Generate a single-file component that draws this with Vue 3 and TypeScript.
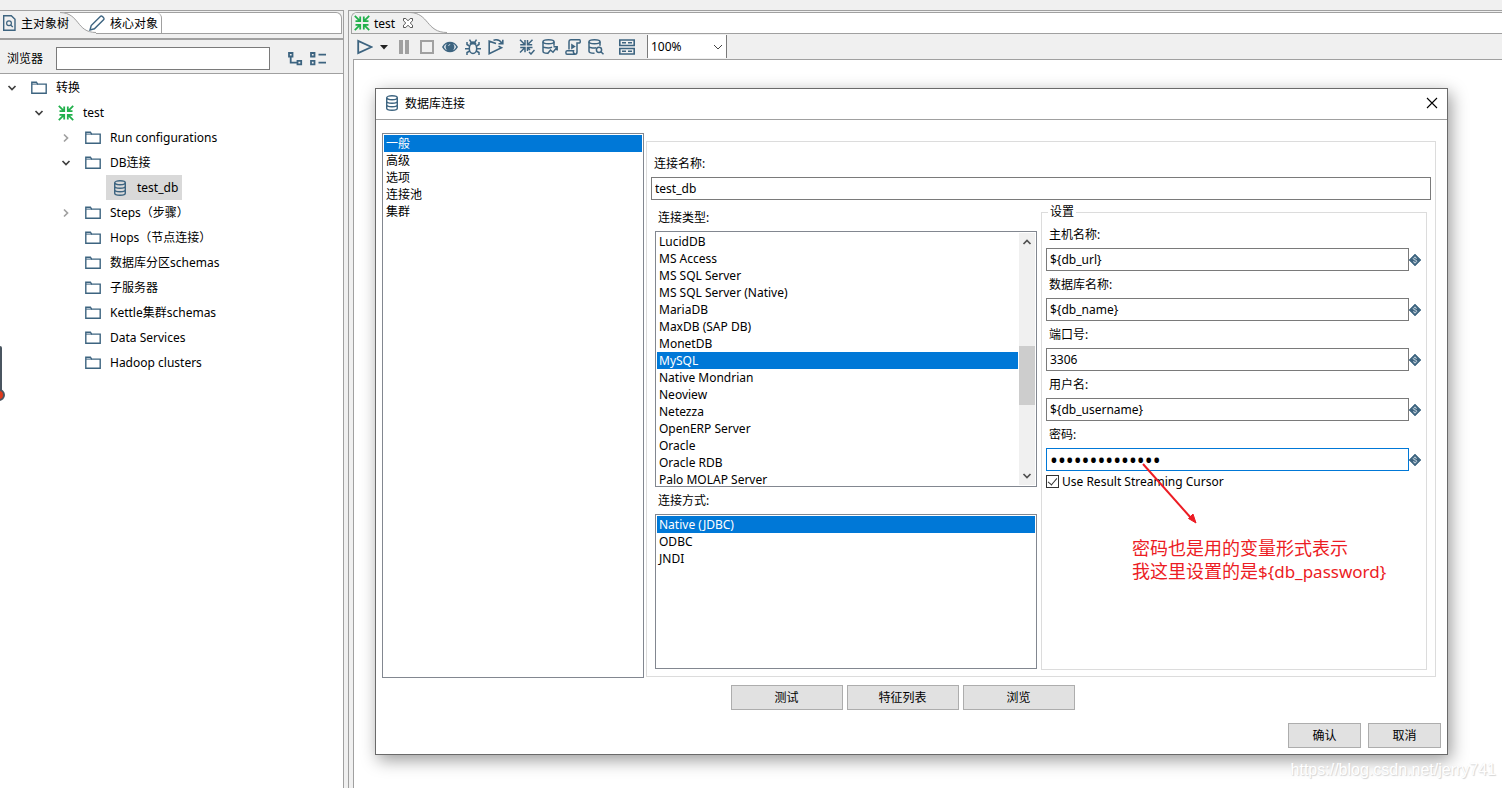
<script setup lang="ts">
import { ref } from 'vue'

interface TreeRow {
  label: string
  level: number
  icon: 'folder' | 'trans' | 'db'
  state?: 'open' | 'closed'
}

interface Field {
  id: string
  label: string
  type: string
  value: string
}

const tree: TreeRow[] = [
  { label: '转换', level: 0, icon: 'folder', state: 'open' },
  { label: 'test', level: 1, icon: 'trans', state: 'open' },
  { label: 'Run configurations', level: 2, icon: 'folder', state: 'closed' },
  { label: 'DB连接', level: 2, icon: 'folder', state: 'open' },
  { label: 'test_db', level: 3, icon: 'db' },
  { label: 'Steps（步骤）', level: 2, icon: 'folder', state: 'closed' },
  { label: 'Hops（节点连接）', level: 2, icon: 'folder' },
  { label: '数据库分区schemas', level: 2, icon: 'folder' },
  { label: '子服务器', level: 2, icon: 'folder' },
  { label: 'Kettle集群schemas', level: 2, icon: 'folder' },
  { label: 'Data Services', level: 2, icon: 'folder' },
  { label: 'Hadoop clusters', level: 2, icon: 'folder' },
]

const sections = ['一般', '高级', '选项', '连接池', '集群']
const types = [
  'LucidDB', 'MS Access', 'MS SQL Server', 'MS SQL Server (Native)', 'MariaDB',
  'MaxDB (SAP DB)', 'MonetDB', 'MySQL', 'Native Mondrian', 'Neoview', 'Netezza',
  'OpenERP Server', 'Oracle', 'Oracle RDB', 'Palo MOLAP Server',
]
const methods = ['Native (JDBC)', 'ODBC', 'JNDI']

const fields = ref<Field[]>([
  { id: 'host', label: '主机名称:', type: 'text', value: '${db_url}' },
  { id: 'dbname', label: '数据库名称:', type: 'text', value: '${db_name}' },
  { id: 'port', label: '端口号:', type: 'text', value: '3306' },
  { id: 'user', label: '用户名:', type: 'text', value: '${db_username}' },
  { id: 'password', label: '密码:', type: 'password', value: '${db_password}' },
])

const node = ref('test_db')
const section = ref('一般')
const dbType = ref('MySQL')
const method = ref('Native (JDBC)')
const connectionName = ref('test_db')
const filter = ref('')
const zoom = ref('100%')
const streaming = ref(true)
</script>

<template>
  <div class="app">
    <svg class="symbols" aria-hidden="true">
      <symbol id="i-folder" viewBox="0 0 16 16">
        <path d="M.8 13.3V2.2h4.6l1.2 1.9h8.6v9.2z" fill="none" stroke="#3d6480" stroke-width="1.4" />
        <path d="M1 4.1h6" stroke="#3d6480" />
      </symbol>
      <symbol id="i-trans" viewBox="0 0 16 16">
        <g fill="none" stroke="#21b04b" stroke-width="1.8">
          <path d="M.8.8l5 5M6.2 1.5v4.7H1.5" />
          <path d="M15.2.8l-5 5M9.8 1.5v4.7h4.7" />
          <path d="M.8 15.2l5-5M6.2 14.5V9.8H1.5" />
          <path d="M15.2 15.2l-5-5M9.8 14.5V9.8h4.7" />
        </g>
      </symbol>
      <symbol id="i-db" viewBox="0 0 16 16">
        <g fill="none" stroke="#3d6480" stroke-width="1.4">
          <ellipse cx="8" cy="2.8" rx="5.3" ry="2" />
          <path d="M2.7 2.8v10.4c0 1.1 2.4 2 5.3 2s5.3-.9 5.3-2V2.8M2.7 6.3c0 1.1 2.4 2 5.3 2s5.3-.9 5.3-2M2.7 9.8c0 1.1 2.4 2 5.3 2s5.3-.9 5.3-2" />
        </g>
      </symbol>
      <symbol id="i-var" viewBox="0 0 12 12">
        <path d="M6 0l6 6-6 6-6-6z" fill="#3d6480" stroke="#3d6480" stroke-width=".6" />
        <path d="M7.700 4.500C7.400 3.900 6.800 3.700 6 3.700c-1 0-1.700.3-1.700 1.100C4.300 6.300 7.800 5.500 7.800 7.200c0 .8-.8 1.100-1.800 1.100-.9 0-1.500-.2-1.900-.9M6 2.600v1.100M6 8.300v1.200" fill="none" stroke="#dfe8ee" stroke-width=".9" />
      </symbol>
      <symbol id="i-down" viewBox="0 0 10 10">
        <path d="M1.500 3L5 6.500 8.500 3" fill="none" stroke="currentColor" stroke-width="1.700" />
      </symbol>
    </svg>

    <aside class="sidebar">
      <div class="tabbar" role="tablist">
        <svg class="tab-shape" width="100" height="22" viewBox="0 0 100 22" aria-hidden="true">
          <path d="M0 0H60C80 1 78 21 96 21V22H0z" fill="#f0f0f0" />
          <path d="M60 .5C80 1 76 20.500 96 20.500" fill="none" stroke="#a0a0a0" />
        </svg>
        <button class="tab" role="tab" aria-selected="true">
          <svg class="ic" viewBox="0 0 16 16" aria-hidden="true">
            <path d="M2.700.7h7.600l3.700 3.600v11H2.700z" fill="none" stroke="#3d6480" stroke-width="1.400" />
            <circle cx="8" cy="8.200" r="2.400" fill="none" stroke="#3d6480" stroke-width="1.200" />
            <path d="M9.600 10l2.200 2" stroke="#3d6480" stroke-width="1.300" />
          </svg>
          <span>主对象树</span>
        </button>
        <button class="tab core" role="tab" aria-selected="false">
          <svg class="ic" viewBox="0 0 16 16" aria-hidden="true">
            <path d="M1 15l1.200-4.400L11.600 1.200c1-1 4.200 2.200 3.200 3.200L5.400 13.800z" fill="none" stroke="#3d6480" stroke-width="1.400" />
          </svg>
          <span>核心对象</span>
        </button>
      </div>
      <div class="filter">
        <label for="filter">浏览器</label>
        <input id="filter" v-model="filter" type="text" />
        <button class="plain" aria-label="展开">
          <svg width="16" height="16" viewBox="0 0 16 16" fill="none" stroke="#3d6480" stroke-width="1.800" aria-hidden="true">
            <path d="M2 2h3.500v3.500H2zM10.500 9.800h3.700v3.500h-3.700zM3.700 5.500v6.200h6.800" />
          </svg>
        </button>
        <button class="plain" aria-label="折叠">
          <svg width="16" height="16" viewBox="0 0 16 16" fill="none" stroke="#3d6480" stroke-width="1.800" aria-hidden="true">
            <path d="M1 2h3.500v3.500H1zM1 9.800h3.500v3.500H1zM8.500 3.700H16M8.500 11.600H16" />
          </svg>
        </button>
      </div>
      <ul class="tree" role="tree">
        <li v-for="row in tree" :key="row.label" role="treeitem" :class="['row', 'l' + row.level]" @click="node = row.label">
          <span class="twist" :class="row.state">
            <svg v-if="row.state" width="10" height="10" aria-hidden="true"><use href="#i-down" /></svg>
          </span>
          <span class="node" :class="{ on: row.label === node }">
            <svg class="ic" aria-hidden="true"><use :href="'#i-' + row.icon" /></svg>
            <span>{{ row.label }}</span>
          </span>
        </li>
      </ul>
    </aside>

    <main class="editor">
      <div class="tabbar etabs" role="tablist">
        <svg class="tab-shape" width="100" height="22" viewBox="0 0 100 22" aria-hidden="true">
          <path d="M0 0H58C78 1 76 21 96 21V22H0z" fill="#f0f0f0" />
          <path d="M58 .5C77 1 74 20.500 95 20.500" fill="none" stroke="#a0a0a0" />
        </svg>
        <button class="tab" role="tab" aria-selected="true">
          <svg class="ic" aria-hidden="true"><use href="#i-trans" /></svg>
          <span>test</span>
        </button>
        <button class="plain" aria-label="关闭标签">
          <svg width="12" height="12" viewBox="0 0 12 12" aria-hidden="true">
            <path d="M1.500 1.500h2.300L6 3.800l2.200-2.300h2.300v2.300L8.200 6l2.300 2.200v2.300H8.200L6 8.200l-2.200 2.300H1.500V8.200L3.800 6 1.500 3.800z" fill="#fff" stroke="#555" />
          </svg>
        </button>
      </div>
      <div class="toolbar">
        <button class="tool" aria-label="运行">
          <svg viewBox="0 0 16 16"><path d="M1.200 1.900v12.200L14.500 8z" fill="none" stroke="#3d6480" stroke-width="1.800" /></svg>
        </button>
        <button class="tool caret" aria-label="运行选项">
          <svg viewBox="0 0 16 16"><path d="M4 6h8l-4 4.500z" fill="#222" /></svg>
        </button>
        <button class="tool" aria-label="暂停">
          <svg viewBox="0 0 16 16"><path d="M3 1h4v14H3zM9 1h4v14H9z" fill="#a0a0a0" /></svg>
        </button>
        <button class="tool" aria-label="停止">
          <svg viewBox="0 0 16 16"><path d="M2 2h12v12H2z" fill="none" stroke="#a0a0a0" stroke-width="2" /></svg>
        </button>
        <button class="tool" aria-label="预览">
          <svg viewBox="0 0 16 16">
            <path d="M0 8c3.500-7 12.500-7 16 0-3.500 7-12.500 7-16 0z" fill="#3d6480" />
            <path d="M1.800 8c.7-1.600 1.800-2.700 3-3.200-1.500 2-1.500 4.400 0 6.400-1.200-.5-2.300-1.600-3-3.200zM14.200 8c-.7-1.600-1.800-2.700-3-3.200 1.500 2 1.500 4.400 0 6.400 1.200-.5 2.300-1.600 3-3.200z" fill="#d8e2ea" />
            <path d="M6.500 6.800c.3-.9.900-1.300 1.700-1.300" fill="none" stroke="#c6d5df" />
          </svg>
        </button>
        <button class="tool" aria-label="调试">
          <svg viewBox="0 0 16 16" fill="none" stroke="#3d6480" stroke-width="1.500">
            <ellipse cx="8" cy="9.500" rx="3.700" ry="5" />
            <path d="M5.500 4.500C6 2.500 10 2.500 10.500 4.500zM6 3L4.500.7M10 3L11.500.7M4.500 7L2 5.500V3M11.500 7L14 5.500V3M4.300 9.700H0M11.700 9.700H16M4.800 12L2 13.500V16M11.200 12l2.800 1.500V16" />
          </svg>
        </button>
        <button class="tool" aria-label="重放">
          <svg viewBox="0 0 16 16" fill="none" stroke="#3d6480" stroke-width="1.600">
            <path d="M8 4.500L1.200 2.200v12.500L13.500 8.800l-3-1.700M5.500 1.200c3.500-1 6.500 0 8.500 3M14.800 .8v4h-4.300" />
          </svg>
        </button>
        <button class="tool gap" aria-label="校验">
          <svg viewBox="0 0 16 16" fill="none" stroke="#3d6480" stroke-width="1.500">
            <path d="M1 .8l4.500 4.500M6 1v4.700H1.200M13.500.8L9 5.300M8.500 1v4.700h4.700M1 13.500L5.500 9M6 13.300V8.600H1.200M8.500 12V8.600h5M9 9l2 2M10 13l2 2 3.500-4" />
          </svg>
        </button>
        <button class="tool" aria-label="影响分析">
          <svg viewBox="0 0 16 16" fill="none" stroke="#3d6480" stroke-width="1.500">
            <ellipse cx="6.500" cy="2.800" rx="5.500" ry="2" />
            <path d="M1 2.800v9.400c0 1.200 2.300 2 4.500 2M12 2.800v4M1 7.200c0 1.400 6 2.600 9 1M5.500 14.800l3-3.800 2.500 2.200 4-5M11.500 7.800h3.700v3.700" />
          </svg>
        </button>
        <button class="tool" aria-label="脚本">
          <svg viewBox="0 0 16 16" fill="none" stroke="#3d6480" stroke-width="1.500">
            <path d="M4 10.500V3c0-1.500.8-2.200 2-2.200h8.500c1 0 1 3.200 0 3.200H12v8.700c0 1.700-.8 2.500-2 2.500H2c-1.500 0-1.500-3.500 0-3.500h6.500c-.5 2 .3 3 1.500 3" />
            <path d="M6.200 4.500v6l4.600-3z" fill="#3d6480" stroke="none" />
          </svg>
        </button>
        <button class="tool" aria-label="浏览数据库">
          <svg viewBox="0 0 16 16" fill="none" stroke="#3d6480" stroke-width="1.500">
            <ellipse cx="6.500" cy="2.800" rx="5.500" ry="2" />
            <path d="M1 2.800v9.400c0 1.200 2.500 2 5.500 2M12 2.800v4M1 7.200c0 1.400 4 2.300 7 1.600" />
            <circle cx="11" cy="10.800" r="2.600" />
            <path d="M12.900 12.700l2.600 2.600" />
          </svg>
        </button>
        <button class="tool gap" aria-label="结果面板">
          <svg viewBox="0 0 16 16" fill="none" stroke="#3d6480" stroke-width="1.600">
            <path d="M.8 1h14.400v5.500H.8zM.8 9.500h14.400V15H.8zM3 3.700h4M9 3.700h4M3 12.200h4M9 12.200h4" />
          </svg>
        </button>
        <span class="zoom">
          <select v-model="zoom" aria-label="缩放">
            <option>100%</option>
          </select>
          <svg width="10" height="10" viewBox="0 0 10 10" aria-hidden="true"><path d="M1 3l4 4 4-4" fill="none" stroke="#444" /></svg>
        </span>
      </div>
      <div class="canvas"></div>
    </main>

    <section class="dialog" role="dialog" aria-labelledby="dlg-title">
      <header class="titlebar">
        <svg class="ic" aria-hidden="true"><use href="#i-db" /></svg>
        <span id="dlg-title">数据库连接</span>
        <button class="plain close" aria-label="关闭">
          <svg width="12" height="12" viewBox="0 0 12 12"><path d="M1 1l10 10M11 1L1 11" stroke="#000" stroke-width="1.100" /></svg>
        </button>
      </header>
      <div class="body">
        <ul class="list sections" role="listbox" aria-label="类别">
          <li v-for="s in sections" :key="s" role="option" :aria-selected="s === section" @click="section = s">{{ s }}</li>
        </ul>
        <div class="panel">
          <label class="lbl" for="conn-name">连接名称:</label>
          <input id="conn-name" v-model="connectionName" class="box" type="text" />
          <div class="cols">
            <div class="col">
              <span id="lbl-type" class="lbl">连接类型:</span>
              <div class="types">
                <ul class="list" role="listbox" aria-labelledby="lbl-type">
                  <li v-for="t in types" :key="t" role="option" :aria-selected="t === dbType" @click="dbType = t">{{ t }}</li>
                </ul>
                <div class="scroll" aria-hidden="true">
                  <svg class="up" width="10" height="10"><use href="#i-down" /></svg>
                  <span class="thumb"></span>
                  <svg width="10" height="10"><use href="#i-down" /></svg>
                </div>
              </div>
              <span id="lbl-method" class="lbl">连接方式:</span>
              <ul class="list methods" role="listbox" aria-labelledby="lbl-method">
                <li v-for="m in methods" :key="m" role="option" :aria-selected="m === method" @click="method = m">{{ m }}</li>
              </ul>
            </div>
            <fieldset class="settings">
              <legend>设置</legend>
              <div v-for="f in fields" :key="f.id" class="field">
                <label class="lbl" :for="f.id">{{ f.label }}</label>
                <div class="line">
                  <input :id="f.id" v-model="f.value" class="box" :class="{ secret: f.type === 'password' }" :type="f.type" autocomplete="off" />
                  <svg width="12" height="12" viewBox="0 0 12 12" aria-hidden="true"><use href="#i-var" /></svg>
                </div>
              </div>
              <label class="check"><input v-model="streaming" type="checkbox" /><span>Use Result Streaming Cursor</span></label>
              <div class="note">
                <svg width="60" height="66" viewBox="0 0 60 66" aria-hidden="true">
                  <path d="M1 2L49 56" stroke="#ec1c24" stroke-width="2" />
                  <path d="M54 61L46.500 56.500 51 52z" fill="#ec1c24" stroke="#ec1c24" />
                </svg>
                <p>密码也是用的变量形式表示<br />我这里设置的是<span class="var">${db_password}</span></p>
              </div>
            </fieldset>
          </div>
        </div>
      </div>
      <div class="actions">
        <button class="btn wide">测试</button>
        <button class="btn wide">特征列表</button>
        <button class="btn wide">浏览</button>
      </div>
      <footer class="confirm">
        <button class="btn">确认</button>
        <button class="btn">取消</button>
      </footer>
    </section>

    <div class="edge" aria-hidden="true"><span></span></div>
    <span class="watermark">https://blog.csdn.net/jerry741</span>
  </div>
</template>

<style>
body {
  margin: 0;
}
</style>

<style scoped>
.app {
  position: relative;
  display: flex;
  gap: 4px;
  box-sizing: border-box;
  min-height: 100vh;
  padding-top: 10px;
  overflow: hidden;
  background: #f0f0f0;
  color: #000;
  font: 12px/17px "Noto Sans", "Noto Sans CJK SC", sans-serif;
}
.app *,
.app *::before,
.app *::after {
  box-sizing: border-box;
}
.symbols {
  position: absolute;
  width: 0;
  height: 0;
}
button,
input,
select {
  font: inherit;
  color: inherit;
  margin: 0;
  outline: none;
}
ul {
  list-style: none;
  margin: 0;
  padding: 0;
}
.ic {
  display: block;
  flex: none;
  width: 16px;
  height: 16px;
}
.plain,
.tab,
.tool {
  display: flex;
  align-items: center;
  justify-content: center;
  padding: 0;
  border: 0;
  background: none;
  white-space: nowrap;
}

/* sidebar */
.sidebar {
  display: flex;
  flex-direction: column;
  flex: none;
  width: 344px;
  border: solid #a0a0a0;
  border-width: 1px 1px 0 0;
  padding-top: 1px;
}
.tabbar {
  position: relative;
  display: flex;
  flex: none;
  height: 22px;
  margin-right: 1px;
  border: solid #a0a0a0;
  border-width: 1px 1px 1px 0;
  border-radius: 0 6px 0 0;
  background: #fff;
}
.tab-shape {
  position: absolute;
  left: 0;
  top: -1px;
}
.tab {
  position: relative;
  gap: 4px;
  padding-left: 1px;
}
.core {
  gap: 5px;
  margin-left: 20px;
  padding: 0 3px 0 0;
  border-right: 1px solid #a0a0a0;
  border-radius: 0 5px 0 0;
}
.filter {
  display: flex;
  align-items: center;
  gap: 7px;
  height: 36px;
  flex: none;
  margin-top: 4px;
  padding: 4px 17px 0 7px;
  border-top: 2px solid #a0a0a0;
  border-bottom: 1px solid #a0a0a0;
}
.filter label {
  width: 42px;
}
.filter input {
  flex: 1;
  min-width: 0;
  height: 23px;
  margin-right: 10px;
  border: 1px solid #7a7a7a;
  background: #fff;
}
.tree {
  flex: 1;
  padding-top: 1px;
  background: #fff;
}
.row {
  display: flex;
  align-items: center;
  height: 25px;
}
.l1 {
  padding-left: 27px;
}
.l2 {
  padding-left: 54px;
}
.l3 {
  padding-left: 81px;
}
.twist {
  display: flex;
  justify-content: center;
  width: 24px;
  margin-right: 1px;
  color: #404040;
}
.twist.closed {
  color: #a0a0a0;
}
.closed svg {
  transform: rotate(-90deg);
}
.node {
  display: flex;
  align-items: center;
  gap: 9px;
  height: 25px;
  padding: 0 4px 0 6px;
}
.node.on {
  background: #d9d9d9;
}

/* editor */
.editor {
  display: flex;
  flex-direction: column;
  flex: 1;
  min-width: 0;
  border: solid #a0a0a0;
  border-width: 1px 0 0 1px;
  padding: 1px 0 0 2px;
}
.etabs {
  margin: 0;
  border-width: 1px 0 1px 1px;
  border-radius: 6px 0 0 0;
  overflow: hidden;
}
.etabs .tab {
  padding-left: 2px;
}
.etabs .plain {
  position: relative;
  margin-left: 7px;
}
.toolbar {
  display: flex;
  align-items: center;
  flex: none;
  height: 25px;
  padding-left: 2px;
}
.tool {
  width: 23px;
  height: 23px;
}
.tool svg {
  width: 16px;
  height: 16px;
}
.caret {
  width: 16px;
}
.gap {
  margin-left: 8px;
}
.zoom {
  display: flex;
  align-items: center;
  width: 80px;
  height: 23px;
  margin-left: 9px;
  padding-right: 3px;
  border: solid #7a7a7a;
  border-width: 0 1px;
  background: #fff;
}
.zoom select {
  flex: 1;
  appearance: none;
  border: 0;
  padding: 0 0 0 3px;
  background: none;
}
.canvas {
  flex: 1;
  margin-left: 2px;
  border: solid #a0a0a0;
  border-width: 1px 0 0 1px;
  background: #fff;
}

/* dialog */
.dialog {
  position: absolute;
  inset: 88px 54px 33px 375px;
  display: flex;
  flex-direction: column;
  border: 1px solid #6a6a6a;
  background: #fff;
  box-shadow: 3px 5px 16px rgba(0, 0, 0, 0.4);
}
.titlebar {
  display: flex;
  align-items: center;
  gap: 5px;
  flex: none;
  height: 31px;
  padding: 0 9px 2px 8px;
  border-bottom: 1px solid #a0a0a0;
}
.close {
  margin-left: auto;
}
.body {
  display: flex;
  flex: 1;
  gap: 2px;
  min-height: 0;
  padding: 13px 11px 0 6px;
}
.list {
  padding: 1px;
  border: 1px solid #828790;
  background: #fff;
}
.list li {
  height: 17px;
  padding-left: 2px;
  white-space: nowrap;
}
.list li[aria-selected="true"] {
  background: #0078d7;
  color: #fff;
}
.sections {
  flex: none;
  width: 262px;
}
.panel {
  display: flex;
  flex-direction: column;
  flex: 1;
  min-width: 0;
  margin: 8px 0 1px;
  padding: 8px 4px 6px;
  border: 1px solid #dcdcdc;
}
.lbl {
  display: block;
  flex: none;
  padding-left: 3px;
  line-height: 27px;
}
.box {
  flex: none;
  width: 100%;
  height: 23px;
  padding: 0 3px;
  border: 1px solid #7a7a7a;
  background: #fff;
}
.secret {
  border-color: #0078d7;
  font-size: 21px;
}
.cols {
  display: grid;
  grid-template-columns: 191fr 193fr;
  gap: 4px;
  flex: 1;
  min-height: 0;
  padding: 4px 4px 0;
}
.col {
  display: flex;
  flex-direction: column;
  min-width: 0;
  padding-bottom: 1px;
}
.types {
  display: flex;
  flex: none;
  height: 256px;
  padding-right: 1px;
  border: 1px solid #828790;
}
.types .list {
  flex: 1;
  border: 0;
  background: none;
}
.scroll {
  display: flex;
  flex-direction: column;
  align-items: center;
  width: 16px;
  margin: 1px 0;
  padding: 4px 0;
  background: #f0f0f0;
  color: #505050;
}
.up {
  transform: rotate(180deg);
}
.thumb {
  width: 16px;
  height: 59px;
  margin: auto 0 66px;
  background: #cdcdcd;
}
.methods {
  flex: 1;
}
.settings {
  position: relative;
  min-width: 0;
  margin: 0;
  padding: 1px 5px 0 4px;
  border: 1px solid #dcdcdc;
}
.settings legend {
  margin-left: 2px;
  padding: 0 2px;
  line-height: 16px;
}
.line {
  display: flex;
  align-items: center;
}
.line .box {
  flex: 1;
  min-width: 0;
}
.check {
  display: flex;
  align-items: center;
  gap: 3px;
  height: 21px;
}
.check input {
  display: flex;
  justify-content: center;
  width: 13px;
  height: 13px;
  appearance: none;
  border: 1px solid #333;
  background: #fff;
}
.check input:checked::after {
  content: "";
  width: 5px;
  height: 9px;
  border: solid #333;
  border-width: 0 1px 1px 0;
  transform: rotate(40deg);
}
.note {
  position: absolute;
  left: 90px;
  top: 242px;
  color: #ec1c24;
  font-size: 18px;
  line-height: 23px;
  white-space: nowrap;
}
.note svg {
  display: block;
  margin-left: 10px;
}
.note p {
  margin: 9px 0 0;
}
.var {
  font-size: 17px;
}
.actions,
.confirm {
  display: flex;
  flex: none;
  gap: 4px;
}
.actions {
  justify-content: center;
  padding: 7px 18px 0 0;
}
.confirm {
  justify-content: flex-end;
  gap: 7px;
  padding: 13px 6px 6px;
}
.btn {
  width: 73px;
  height: 25px;
  padding: 0;
  border: 1px solid #adadad;
  background: #e1e1e1;
  text-align: center;
}
.wide {
  width: 112px;
}

/* overlays */
.edge {
  position: absolute;
  left: 0;
  top: 346px;
  width: 2px;
  height: 49px;
  border-radius: 0 2px 0 0;
  background: #4a5560;
}
.edge span {
  position: absolute;
  left: -7px;
  bottom: -6px;
  width: 12px;
  height: 12px;
  border: 2px solid #4a5560;
  border-radius: 50%;
  background: #e03a1c;
}
.watermark {
  position: absolute;
  right: 6px;
  bottom: 8px;
  color: #fff;
  font: 16px/20px "Liberation Sans", sans-serif;
  text-shadow: 1px 1px 1px #d4d4d4, 0 0 1px #e4e4e4;
}
</style>
